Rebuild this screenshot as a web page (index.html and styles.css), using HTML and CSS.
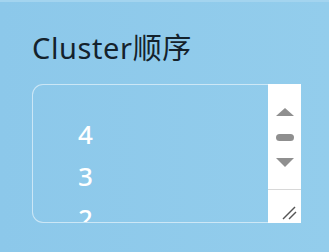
FILE: index.html
```html
<!DOCTYPE html>
<html>
<head>
<meta charset="utf-8">
<link rel="stylesheet" href="styles.css">
</head>
<body>
<div class="panel">
  <div class="title">Cluster顺序</div>
  <div class="box">
    <div class="list">
      <div class="item">4</div>
      <div class="item">3</div>
      <div class="item">2</div>
      <div class="item">1</div>
    </div>
    <div class="scrollbar">
      <div class="track">
        <div class="arrow-up"></div>
        <div class="thumb"></div>
        <div class="arrow-down"></div>
      </div>
      <div class="corner">
        <svg width="16" height="18" viewBox="0 0 16 18">
          <path d="M1 17 L13 5" stroke="#555" stroke-width="1.4" fill="none"/>
          <path d="M7 17 L14 10" stroke="#555" stroke-width="1.4" fill="none"/>
        </svg>
      </div>
    </div>
  </div>
</div>
</body>
</html>
```
FILE: styles.css
```css
html, body {
  margin: 0;
  padding: 0;
}
body {
  width: 329px;
  height: 252px;
  background: linear-gradient(90deg, #8cc8ea 0%, #93cdec 100%);
  border-top: 2px solid #a3d4ef;
  box-sizing: border-box;
  font-family: "Noto Sans", "Noto Sans CJK SC", sans-serif;
  overflow: hidden;
}
.panel {
  padding: 26px 28px 0 32px;
}
.title {
  font-size: 29px;
  line-height: 40px;
  color: #14222c;
  letter-spacing: 0.6px;
}
.box {
  margin-top: 16px;
  width: 269px;
  height: 139px;
  box-sizing: border-box;
  display: flex;
  position: relative;
}
.list {
  flex: 1;
  border: 1px solid rgba(255, 255, 255, 0.55);
  border-right: none;
  border-radius: 11px 0 0 11px;
  padding: 28px 0 0 45px;
  overflow: hidden;
  position: relative;
}
.list::after {
  content: "";
  position: absolute;
  top: -1px;
  right: 0;
  width: 1px;
}
.item {
  font-size: 26px;
  font-weight: 500;
  line-height: 42px;
  height: 42px;
  color: #ffffff;
}
.scrollbar {
  width: 33px;
  background: #ffffff;
  display: flex;
  flex-direction: column;
}
.track {
  height: 106px;
  border-bottom: 1px solid #d8d8d8;
  display: flex;
  flex-direction: column;
  align-items: center;
  padding-top: 24px;
  box-sizing: border-box;
}
.arrow-up {
  width: 0;
  height: 0;
  border-left: 9px solid transparent;
  border-right: 9px solid transparent;
  border-bottom: 8px solid #8f8f8f;
}
.thumb {
  width: 18px;
  height: 7px;
  border-radius: 4px;
  background: #8f8f8f;
  margin-top: 18px;
}
.arrow-down {
  width: 0;
  height: 0;
  border-left: 9px solid transparent;
  border-right: 9px solid transparent;
  border-top: 9px solid #8f8f8f;
  margin-top: 17px;
}
.corner {
  flex: 1;
  display: flex;
  align-items: flex-end;
  justify-content: flex-end;
  padding: 0 3px 3px 0;
}
```
